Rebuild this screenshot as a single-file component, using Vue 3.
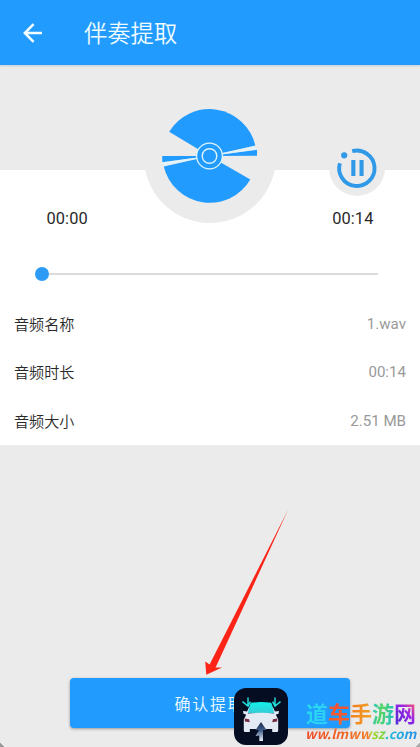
<script setup>
const rows = [
  { label: '音频名称', value: '1.wav' },
  { label: '音频时长', value: '00:14' },
  { label: '音频大小', value: '2.51 MB' },
]
const mark = [
  { ch: '道', cls: 'm1' },
  { ch: '车', cls: 'm2' },
  { ch: '手', cls: 'm3' },
  { ch: '游', cls: 'm4' },
  { ch: '网', cls: 'm5' },
]
</script>

<template>
  <div class="screen">
    <header class="bar">
      <svg class="back" viewBox="0 0 20 20" width="20" height="20">
        <path d="M19 10H2M10.6 1.2L1.8 10l8.8 8.8" fill="none" stroke="#f2fdff" stroke-width="2.5" />
      </svg>
      <h1>伴奏提取</h1>
    </header>

    <section class="stage">
      <div class="hub">
        <svg viewBox="0 0 132 132" width="132" height="132">
          <g fill="#229bff">
            <path d="M65.5 65L25.2 40.8A47.1 47.1 0 0 1 111.3 54.4Z" />
            <path d="M65.5 65L113 58.7V64.8Z" />
            <path d="M65.5 65L106.3 88.5A47.1 47.1 0 0 1 19.8 75.5Z" />
            <path d="M65.5 65H18.2L18.4 71.2Z" />
          </g>
          <g fill="#e0f5fc">
            <path d="M76 62.6L111.3 54.9L112.8 58.8L76 63.8Z" opacity=".75" />
            <path d="M55 66.2L18.4 71.2L19.8 75.1L55 67.5Z" opacity=".75" />
          </g>
          <circle cx="65.5" cy="65" r="12.9" fill="#229bff" stroke="#dcf4fc" stroke-width="1.3" />
          <circle cx="65.5" cy="65" r="7.3" fill="none" stroke="#dcf4fc" stroke-width="1.4" />
        </svg>
      </div>
      <div class="pause">
        <svg viewBox="0 0 56 56" width="56" height="56">
          <path d="M23.2 11.2A17.7 17.7 0 1 1 10.9 23.2" fill="none" stroke="#3099e8" stroke-width="3.9" />
          <circle cx="15.2" cy="15.3" r="3.1" fill="#3099e8" />
          <path d="M22.3 20h4.1v16h-4.1zM30.5 20h4.1v16h-4.1z" fill="#3099e8" />
        </svg>
      </div>
    </section>

    <section class="panel">
      <div class="times"><span>00:00</span><span>00:14</span></div>
      <div class="slider"><i class="knob"></i><i class="track"></i></div>
      <div v-for="row in rows" :key="row.label" class="row">
        <span class="label">{{ row.label }}</span><span class="value">{{ row.value }}</span>
      </div>
    </section>

    <footer class="foot"><button>确认提取</button></footer>

    <svg class="arrow" viewBox="0 0 90 170" width="90" height="170">
      <path d="M88 1L15.6 158.6L22 158.6L6.3 165.8L5.2 152.4L9.6 155.6Z" fill="#fb2417" />
    </svg>

    <svg class="app-icon" viewBox="0 0 54 57" width="54" height="57">
      <defs>
        <linearGradient id="roof" x1="0" y1="0" x2="0" y2="1">
          <stop offset="0" stop-color="#12f2e9" /><stop offset="1" stop-color="#35ccd5" />
        </linearGradient>
        <linearGradient id="road" x1="0" y1="0" x2="0" y2="1">
          <stop offset="0" stop-color="#17294c" /><stop offset=".45" stop-color="#41608c" /><stop offset="1" stop-color="#edf2fb" />
        </linearGradient>
      </defs>
      <rect width="54" height="57" rx="12" fill="#050d22" />
      <path d="M16.8 14.8Q27 13.2 37.2 14.8L41 25H13Z" fill="url(#roof)" />
      <path d="M15.6 18L11.5 27H42.5L38.4 18L40.2 25.4H13.8Z" fill="#d5e7f2" />
      <path d="M9 23l4.4.6v2.6L9.6 26zM45 23l-4.4.6v2.6l3.8-.2z" fill="#e2ebf5" />
      <path d="M12.5 26Q27 23.5 41.5 26L44.2 31.5V42.5Q44.2 44 42.8 44H38.2V41H15.8V44H11.2Q9.8 44 9.8 42.5V31.5Z" fill="#e3eaf4" />
      <path d="M10.7 30.4l4.4.8.6 3-4.8-.8zM43.3 30.4l-4.4.8-.6 3 4.8-.8z" fill="#702a3e" />
      <path d="M27 34L32.5 42H29V53H25.3V47.5L21.5 48L25 42H21.5Z" fill="url(#road)" />
      <path d="M14 9.5v8.4M8.5 13.6l5.5 4.6 2.4-4.6M41 9.5v8.4M46.5 13.6l-5.5 4.6-2.4-4.6" fill="none" stroke="#20dcd8" stroke-width="1.5" />
    </svg>

    <div class="watermark">
      <div class="name"><span v-for="m in mark" :key="m.ch" :class="m.cls">{{ m.ch }}</span></div>
      <div class="site">ww.lmwwsz.com</div>
    </div>
    <i class="corner left"></i>
    <i class="corner right"></i>
  </div>
</template>

<style>
body { margin: 0; }
</style>

<style scoped>
.screen { position: relative; width: 420px; height: 747px; overflow: hidden; display: flex; flex-direction: column; background: #ebebeb; color: #292929; font-family: Roboto, "Noto Sans CJK SC", sans-serif; }
.bar { height: 65px; box-sizing: border-box; flex: none; display: flex; align-items: center; gap: 41px; padding-left: 23px; background: #229bff; box-shadow: 0 1px 2px #c4cbd0; }
.back { display: block; }
h1 { margin: 0; padding-top: 2px; font-size: 23.3px; line-height: 34px; font-weight: 350; color: #effcff; }
.stage { position: relative; height: 105px; flex: none; }
.hub, .pause { position: absolute; z-index: 1; border-radius: 50%; background: #ebebeb; }
.hub { left: 144px; top: 26px; width: 132px; height: 132px; }
.pause { left: 329px; top: 75px; width: 56px; height: 56px; }
svg { display: block; }
.panel { height: 275px; flex: none; box-sizing: border-box; padding-top: 37px; background: #fff; }
.times { display: flex; justify-content: space-between; padding: 0 46.5px; height: 24px; line-height: 24px; font-size: 16.4px; letter-spacing: .1px; }
.slider { display: flex; align-items: center; height: 14px; margin: 36px 42px 0 35px; }
.knob { width: 14px; height: 14px; border-radius: 50%; background: #2b9bf5; }
.track { flex: 1; height: 2px; background: #dadada; }
.row { display: flex; justify-content: space-between; align-items: center; height: 48.5px; padding: 0 14px; font-size: 15.1px; }
.slider + .row { margin-top: 17.5px; }
.label { font-weight: 350; font-family: "Noto Sans CJK SC", sans-serif; font-size: 15.1px; }
.value { color: #999; padding-top: 2px; }
.foot { margin-top: 233px; padding: 0 70px; }
button { display: block; width: 280px; height: 50px; border: 0; border-radius: 4px; padding: 0; background: #229bff; box-shadow: 0 1px 3px rgba(0,0,0,.35); color: #effcff; font: 350 16px "Noto Sans CJK SC", sans-serif; letter-spacing: 1.8px; }
.arrow { position: absolute; left: 200px; top: 509px; }
.app-icon { position: absolute; left: 234px; top: 688px; }
.watermark { position: absolute; left: 306px; top: 699px; width: 112px; }
.name { display: flex; height: 26px; font: 700 22px/26px "Noto Sans CJK SC", sans-serif; }
.name span { color: transparent; background-clip: text; -webkit-background-clip: text; }
.m1 { background-image: linear-gradient(100deg, #22dcec, #30ccfa); }
.m2 { background-image: linear-gradient(#ee4b35, #f8652a); }
.m3 { background-image: linear-gradient(100deg, #f57a1e, #f0a424); }
.m4 { background-image: linear-gradient(100deg, #22c8d0, #55d560 45%, #18bdd6); }
.m5 { background-image: linear-gradient(50deg, #452bd4, #9a25e6 55%, #f25080 85%, #fa8034); }
.site { width: max-content; height: 18px; line-height: 18px; margin-left: -1px; font-family: "Noto Sans CJK SC", sans-serif; font-size: 13.3px; font-style: italic; font-weight: 700; padding-right: 3px; color: transparent; background: linear-gradient(90deg, #ee4a27, #f37821 56%, #a5d525 58%, #7cd336 69%, #20bcd8 72%, #258de9); background-clip: text; -webkit-background-clip: text; }
.corner { position: absolute; bottom: 0; width: 4px; height: 5px; }
.left { left: 0; background: linear-gradient(45deg, #999 45%, transparent 55%); }
.right { right: 0; background: linear-gradient(-45deg, #aaa 45%, transparent 55%); }
</style>
